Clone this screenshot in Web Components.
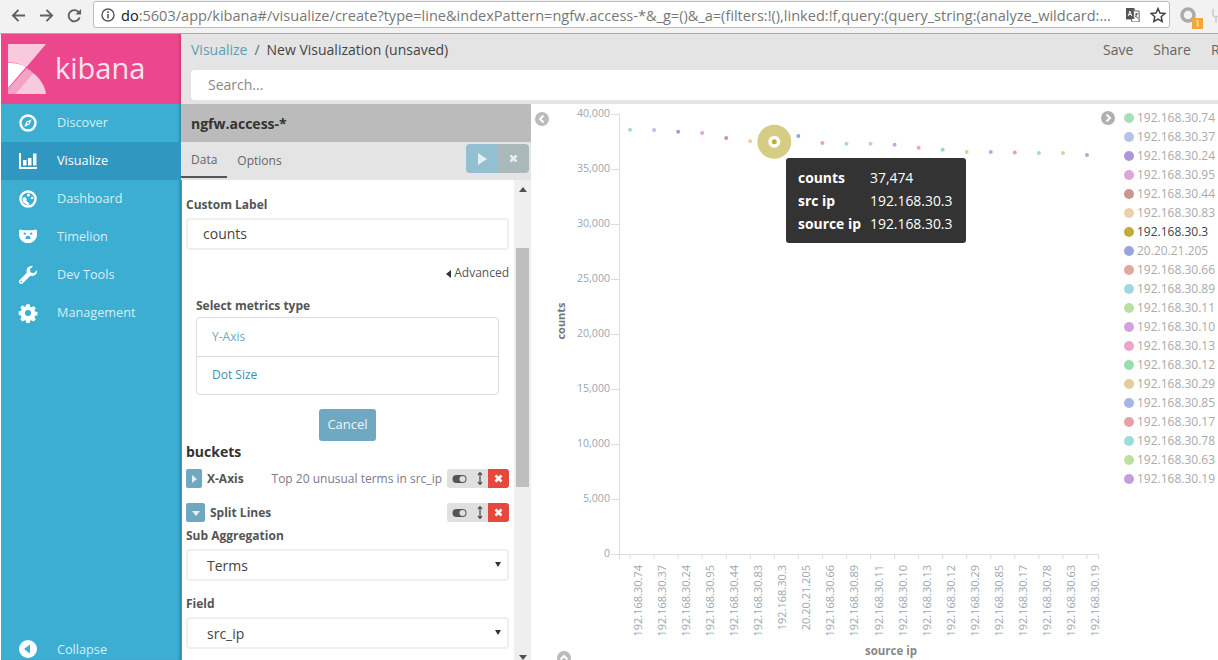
<!DOCTYPE html>
<html>
<head>
<meta charset="utf-8">
<title>Kibana</title>
<style>
  html, body { margin: 0; height: 660px; overflow: hidden; background: #fff; }
  body { font-family: "Open Sans", "Liberation Sans", sans-serif; display: flex; flex-direction: column; }
  .app { flex: 1; display: flex; min-height: 0; padding-left: 1px; }
  .work { flex: 1; min-width: 0; display: flex; flex-direction: column; }
  .split { flex: 1; display: flex; min-height: 0; }
</style>
</head>
<body>
<browser-bar></browser-bar>
<div class="app">
  <kbn-sidebar>
    <nav-item icon="compass">Discover</nav-item>
    <nav-item icon="bars" active>Visualize</nav-item>
    <nav-item icon="dash">Dashboard</nav-item>
    <nav-item icon="bear">Timelion</nav-item>
    <nav-item icon="wrench">Dev Tools</nav-item>
    <nav-item icon="gear">Management</nav-item>
  </kbn-sidebar>
  <div class="work">
    <top-nav></top-nav>
    <div class="split">
      <vis-editor></vis-editor>
      <line-chart></line-chart>
    </div>
  </div>
</div>

<script>
const ICONS = {
  compass: '<circle cx="9" cy="9" r="7.5" fill="none" stroke="currentColor" stroke-width="2.4"/><path d="M12.8 5.2 10.4 10.4 5.2 12.8 7.6 7.6Z" fill="currentColor"/><circle cx="9" cy="9" r="1" fill="#3caed2"/>',
  bars: '<path d="M0 1h2v14h16v2H0Z M4 8h3.5v5.5H4Z M9 6h3.5v7.5H9Z M14 1.500h3.500v12H14Z" fill="currentColor"/>',
  dash: '<circle cx="9" cy="9" r="7.500" fill="none" stroke="currentColor" stroke-width="2.400"/><path d="M3.500 8.500a2.200 2.200 0 1 1 3.800 2.200l3.700 3.500-3 .8-4-3Z" fill="currentColor"/><circle cx="9.500" cy="5" r="1.500" fill="currentColor"/><circle cx="13" cy="8" r="1.300" fill="currentColor"/>',
  bear: '<path d="M0 2.500c1-1.200 2.600-1.200 3.600-.3h10.800c1-.9 2.600-.9 3.600.3v3.700c0 5-3.700 8.800-9 8.800s-9-3.800-9-8.800Z" fill="currentColor"/><circle cx="5.800" cy="5.600" r="1.200" fill="#3caed2"/><circle cx="12.200" cy="5.600" r="1.200" fill="#3caed2"/><path d="M6.500 11c0-2 1-3.200 2.500-3.200s2.500 1.200 2.500 3.200Z" fill="#3caed2"/>',
  wrench: '<path d="M18 4.200 14.800 7.300 11.600 6.500 10.800 3.200 14 .2C11.300-.5 8.500.8 7.700 3.400c-.4 1.200-.3 2.300.1 3.400L.6 14c-.9.900-.9 2.300 0 3.200s2.300.9 3.200 0l7.300-7.300c3.500 1 7.400-1.500 6.900-5.700ZM2.200 16.500a.9.900 0 1 1 0-1.800.9.900 0 0 1 0 1.800Z" fill="currentColor"/>',
  gear: '<path fill-rule="evenodd" d="M7.300 0h3.400l.5 2.500 1.500.6 2.100-1.400 2.400 2.400-1.400 2.100.6 1.500 2.500.5v3.400l-2.500.5-.6 1.500 1.400 2.100-2.400 2.400-2.100-1.400-1.500.6-.5 2.500H7.300l-.5-2.500-1.500-.6-2.100 1.400-2.400-2.400 1.400-2.100-.6-1.500L-.900 11V7.600l2.500-.5.600-1.500L.8 3.500l2.400-2.400 2.100 1.400 1.500-.6ZM9 6a3.200 3.200 0 1 0 0 6.400A3.200 3.200 0 0 0 9 6Z" fill="currentColor" transform="translate(.5 .3) scale(.95)"/>'
};

class BrowserBar extends HTMLElement {
  constructor() {
    super();
    this.attachShadow({ mode: 'open' }).innerHTML = `
      <style>
        :host { display: flex; flex: none; align-items: flex-start; height: 34px; box-sizing: border-box; background: #f2f2f2; border-bottom: 1px solid #a9a9a9; overflow: hidden; font-family: "Open Sans", sans-serif; }
        .nav { display: flex; flex: none; width: 93px; height: 30px; align-items: center; padding-left: 11px; gap: 13px; box-sizing: border-box; color: #5f6060; }
        .nav svg { width: 15px; height: 15px; }
        .url { flex: none; width: 1077px; height: 27px; margin-top: 1px; box-sizing: border-box; background: #fff; border: 1px solid #bdbdbd; border-radius: 3px; display: flex; align-items: center; padding-left: 7px; gap: 6px; color: #777; font-size: 14.55px; white-space: nowrap; overflow: hidden; }
        .url b { font-weight: 400; color: #111; }
        .url .t { width: 994px; overflow: hidden; flex: none; }
        .url svg { flex: none; }
        .ext { position: relative; flex: none; margin-left: 10px; margin-top: 5px; width: 48px; height: 24px; color: #aaa; }
        .badge { position: absolute; left: 12px; top: 13px; width: 11px; height: 11px; background: #eea83c; color: #fff; font-size: 9px; line-height: 11px; text-align: center; }
      </style>
      <div class="nav">
        <svg viewBox="0 0 16 16"><path d="M15 8H2M8 2 2 8l6 6" fill="none" stroke="currentColor" stroke-width="2"/></svg>
        <svg viewBox="0 0 16 16"><path d="M1 8h13M8 2l6 6-6 6" fill="none" stroke="currentColor" stroke-width="2"/></svg>
        <svg viewBox="0 0 16 16"><path d="M13.500 10a6 6 0 1 1-.8-5.200" fill="none" stroke="currentColor" stroke-width="2"/><path d="M15 1v6H9Z" fill="currentColor"/></svg>
      </div>
      <div class="url">
        <svg width="14" height="14" viewBox="0 0 14 14"><circle cx="7" cy="7" r="6" fill="none" stroke="#555" stroke-width="1.400"/><path d="M6.200 6h1.600v4.500H6.200ZM6.200 3.300h1.600v1.600H6.200Z" fill="#555"/></svg>
        <span class="t"><b>do</b>:5603/app/kibana#/visualize/create?type=line&amp;indexPattern=ngfw.access-*&amp;_g=()&amp;_a=(filters:!(),linked:!f,query:(query_string:(analyze_wildcard:...</span>
        <svg width="14" height="14" viewBox="0 0 16 14" preserveAspectRatio="none" style="margin-left:5px"><path d="M0 0h9l1 3h5v11H7l-1-3H0Z" fill="#fff" stroke="#555"/><path d="M0 0h9v11H0Z" fill="#555"/><path d="M2.500 8 4.500 3l2 5M3.200 6.500h2.600" fill="none" stroke="#fff"/><path d="M10 6h4M12 5v1c0 2-1 3-2.500 4M10.500 7.500c.7 1.300 2 2.300 3.500 2.700" fill="none" stroke="#555"/></svg>
        <svg width="16" height="16" viewBox="0 0 16 16" style="margin-left:4px"><path d="M8 1.500 10 6l4.800.5-3.600 3.200 1 4.800L8 12l-4.200 2.500 1-4.800L1.200 6.500 6 6Z" fill="none" stroke="#444" stroke-width="1.500"/></svg>
      </div>
      <div class="ext">
        <svg width="48" height="20" viewBox="0 0 48 20"><circle cx="8" cy="10" r="6" fill="none" stroke="currentColor" stroke-width="3.500"/><path d="M33 4v5c0 2 1 3 3 3s3-1 3-3V4M36 12v6" fill="none" stroke="#ccc" stroke-width="1.500"/></svg>
        <span class="badge">1</span>
      </div>`;
  }
}

class NavItem extends HTMLElement {
  constructor() {
    super();
    this.attachShadow({ mode: 'open' }).innerHTML = `
      <style>
        :host { display: flex; align-items: center; height: 38px; box-sizing: border-box; padding-bottom: 2px; color: #d6eff7; font-size: 12.7px; }
        :host([active]) { background: #2f97c0; color: #fff; }
        svg { width: 18px; height: 18px; margin: 2px 20px 0 18px; color: #fff; overflow: visible; }
      </style>
      <svg viewBox="0 0 18 18">${ICONS[this.getAttribute('icon')] || ''}</svg>
      <slot></slot>`;
  }
}

class KbnSidebar extends HTMLElement {
  constructor() {
    super();
    this.attachShadow({ mode: 'open' }).innerHTML = `
      <style>
        :host { display: flex; flex-direction: column; flex: none; width: 180px; height: 100%; background: #3caed2; box-shadow: inset -3px 0 2px -1px rgba(20,90,120,.35); font-family: "Open Sans", sans-serif; }
        .logo { height: 70px; background: #ec478d; display: flex; align-items: center; padding-left: 7px; box-sizing: border-box; box-shadow: inset -3px 0 2px -1px rgba(120,20,60,.2); }
        .logo svg { flex: none; width: 38px; height: 50px; }
        .logo span { color: #fce4ee; font-size: 29px; line-height: 40px; margin-left: 9px; margin-top: -2px; }
        .items { flex: 1; }
        .collapse { display: flex; align-items: center; height: 22px; color: #d6eff7; font-size: 12.7px; }
        .collapse svg { width: 18px; height: 18px; margin: 0 20px 0 18px; }
      </style>
      <div class="logo">
        <svg viewBox="0 0 38 50">
          <path d="M0 0H38L18.500 23C13 20 6 18 0 18.500Z" fill="#f9c9dd"/>
          <path d="M0 19C6 18.500 13 20 18 23L0 44Z" fill="#fff"/>
          <path d="M0 50V45L18.500 24C21 25.500 23 27 25 29L7 50Z" fill="#f5a3c4"/>
          <path d="M7 50 25 29C32 34 37 42 38 50Z" fill="#f9c9dd"/>
        </svg>
        <span>kibana</span>
      </div>
      <div class="items"><slot></slot></div>
      <div class="collapse">
        <svg viewBox="0 0 18 18"><circle cx="9" cy="9" r="9" fill="#fff"/><path d="M11 4.500v9L5 9Z" fill="#3caed2"/></svg>
        Collapse
      </div>`;
  }
}

class TopNav extends HTMLElement {
  constructor() {
    super();
    this.attachShadow({ mode: 'open' }).innerHTML = `
      <style>
        :host { display: block; flex: none; height: 70px; background: #e4e4e4; padding-left: 10px; font-family: "Open Sans", sans-serif; font-size: 14px; box-sizing: border-box; }
        .row { display: flex; height: 36px; padding-bottom: 6px; box-sizing: border-box; align-items: center; color: #444; white-space: nowrap; }
        .crumb { color: #5a9fb8; }
        .sep { margin: 0 7px 0 7px; color: #666; }
        .acts { margin-left: auto; display: flex; color: #666; width: 115px; gap: 20px; flex: none; }
        .search { height: 30px; box-sizing: border-box; padding-bottom: 2px; background: #fff; border-radius: 4px 0 0 4px; display: flex; align-items: center; padding-left: 17px; color: #888; }
      </style>
      <div class="row">
        <span class="crumb">Visualize</span><span class="sep">/</span><span>New Visualization (unsaved)</span>
        <span class="acts"><span>Save</span><span>Share</span><span>R</span></span>
      </div>
      <div class="search">Search...</div>`;
  }
}

class FormSelect extends HTMLElement {
  constructor() {
    super();
    this.attachShadow({ mode: 'open' }).innerHTML = `
      <style>
        :host { display: flex; align-items: center; height: 32px; box-sizing: border-box; border: 2px solid #ecf0f1; border-radius: 4px; padding-left: 19px; font-size: 14px; color: #444; position: relative; }
        i { position: absolute; right: 6px; top: 11px; border: 3px solid transparent; border-top: 5px solid #333; border-bottom: 0; }
      </style>
      <slot></slot><i></i>`;
  }
}

class AggRow extends HTMLElement {
  constructor() {
    super();
    const open = this.hasAttribute('open');
    this.attachShadow({ mode: 'open' }).innerHTML = `
      <style>
        :host { display: flex; align-items: center; height: 19px; font-size: 12px; color: #666; white-space: nowrap; }
        .tog { flex: none; width: ${open ? 19 : 16}px; height: 19px; border-radius: 2px; background: #6fa9c1; display: flex; align-items: center; justify-content: center; margin-right: 5px; }
        b { color: #555; font-weight: 700; }
        .sum { margin-left: auto; margin-right: 5px; color: #7b7b8a; }
        .ctl { margin-left: auto; flex: none; display: flex; width: 62px; height: 19px; background: #e0e0e0; border-radius: 3px; overflow: hidden; align-items: center; }
        .sum + .ctl { margin-left: 0; }
        .ctl svg { flex: none; }
        .x { margin-left: auto; width: 21px; height: 19px; background: #e8483b; display: flex; align-items: center; justify-content: center; }
      </style>
      <span class="tog"><svg width="8" height="8" viewBox="0 0 8 8"><path d="${open ? 'M0 2h8L4 7Z' : 'M2 0v8l5-4Z'}" fill="#e4eff4"/></svg></span>
      <b><slot></slot></b>
      ${this.hasAttribute('summary') ? `<span class="sum">${this.getAttribute('summary')}</span>` : ''}
      <span class="ctl">
        <svg width="15" height="10" viewBox="0 0 15 10" style="margin-left:5px"><rect x="0.500" y="1" width="14" height="8" rx="4" fill="#555"/><circle cx="10.500" cy="5" r="3" fill="#e0e0e0"/></svg>
        <svg width="6" height="13" viewBox="0 0 6 13" style="margin-left:10px"><path d="M3 1v11M1 3l2-2.500L5 3M1 10l2 2.500L5 10" fill="none" stroke="#555" stroke-width="1.300"/></svg>
        <span class="x"><svg width="9" height="9" viewBox="0 0 9 9"><path d="M1.500 1.500l6 6M7.500 1.500l-6 6" stroke="#fff" stroke-width="2.500"/></svg></span>
      </span>`;
  }
}

class VisEditor extends HTMLElement {
  constructor() {
    super();
    this.attachShadow({ mode: 'open' }).innerHTML = `
      <style>
        :host { display: flex; flex-direction: column; flex: none; width: 350px; height: 100%; min-height: 0; color: #444; font-family: "Open Sans", sans-serif; font-size: 12px; }
        .title { flex: none; height: 38px; background: #bbb; display: flex; align-items: center; padding-left: 10px; font-size: 14px; font-weight: 700; color: #333; }
        .tabs { flex: none; height: 38px; background: #e4e4e4; display: flex; position: relative; box-sizing: border-box; }
        .tab { height: 36px; display: flex; align-items: center; padding: 0 10px; color: #666; box-sizing: border-box; }
        .tab.on { border-bottom: 2px solid #555; }
        .run { margin-left: auto; margin-right: 2px; margin-top: 2px; display: flex; height: 29px; }
        .run span { width: 32px; display: flex; align-items: center; justify-content: center; }
        .run .go { background: #93c0d0; border-radius: 4px 0 0 4px; }
        .run .no { background: #a9b8b8; width: 31px; border-radius: 0 4px 4px 0; }
        .body { flex: 1; min-height: 0; display: flex; overflow: hidden; box-shadow: inset 1px 0 0 #3a9cc0; }
        .form { flex: 1; min-width: 0; padding: 17px 5px 0 5px; }
        .lab { font-weight: 700; color: #555; line-height: 16px; display: block; }
        .input { height: 32px; box-sizing: border-box; padding-bottom: 2px; border: 2px solid #ecf0f1; border-radius: 4px; margin-top: 5px; display: flex; align-items: center; padding-left: 15px; font-size: 14px; }
        .adv { text-align: right; margin-top: 15px; line-height: 16px; color: #555; }
        .adv i { display: inline-block; border: 4px solid transparent; border-right: 5px solid #333; border-left: 0; margin-right: 3px; vertical-align: -1px; }
        .metrics { padding: 0 10px; margin-top: 17px; }
        .list { border: 1px solid #d9dde0; border-radius: 4px; margin-top: 3px; }
        .list div { height: 38px; display: flex; align-items: center; padding: 0 0 2px 15px; color: #6da8c0; box-sizing: border-box; }
        .list div + div { border-top: 1px solid #d9dde0; color: #3f8fae; }
        .cancel { display: block; width: 57px; height: 32px; line-height: 30px; margin: 14px auto 0; background: #6fa9c1; color: #eef6f9; border-radius: 3px; text-align: center; font-size: 13px; }
        h3 { margin: 1px 0 0; font-size: 14px; line-height: 20px; font-weight: 700; color: #333; }
        agg-row { margin-top: 7px; }
        agg-row + agg-row { margin-top: 15px; }
        .sub { margin-top: 6px; }
        .f2 { margin-top: 15px; }
        form-select { margin-top: 5px; }
        .bar { flex: none; width: 17px; background: #efefef; position: relative; }
        .thumb { position: absolute; left: 2px; width: 13px; top: 68px; height: 239px; background: #bebebe; }
        .bar i { position: absolute; left: 5px; border: 4px solid transparent; }
        .bar .up { top: 7px; border-bottom: 5px solid #505050; border-top: 0; }
        .bar .dn { bottom: 0; border-top: 5px solid #505050; border-bottom: 0; }
      </style>
      <div class="title">ngfw.access-*</div>
      <div class="tabs">
        <span class="tab on">Data</span><span class="tab">Options</span>
        <span class="run">
          <span class="go"><svg width="12" height="12" viewBox="0 0 12 12"><path d="M2 0v12l9-6Z" fill="#e4eff4"/></svg></span>
          <span class="no"><svg width="9" height="9" viewBox="0 0 9 9"><path d="M1.500 1.500l6 6M7.500 1.500l-6 6" stroke="#e8eeee" stroke-width="2.500"/></svg></span>
        </span>
      </div>
      <div class="body">
        <div class="form">
          <span class="lab">Custom Label</span>
          <div class="input">counts</div>
          <div class="adv"><i></i>Advanced</div>
          <div class="metrics">
            <span class="lab">Select metrics type</span>
            <div class="list"><div>Y-Axis</div><div>Dot Size</div></div>
          </div>
          <span class="cancel">Cancel</span>
          <h3>buckets</h3>
          <agg-row summary="Top 20 unusual terms in src_ip">X-Axis</agg-row>
          <agg-row open>Split Lines</agg-row>
          <span class="lab sub">Sub Aggregation</span>
          <form-select>Terms</form-select>
          <span class="lab f2">Field</span>
          <form-select>src_ip</form-select>
        </div>
        <div class="bar"><i class="up"></i><div class="thumb"></div><i class="dn"></i></div>
      </div>`;
  }
}

// same order for the x axis and the legend
const POINTS = [
  ['192.168.30.74', 129.7, '#a6dfb8'], ['192.168.30.37', 130, '#b5c2ea'], ['192.168.30.24', 131.7, '#ae97d9'],
  ['192.168.30.95', 133, '#dea5dd'], ['192.168.30.44', 138, '#cb9594'], ['192.168.30.83', 141.3, '#ecd0ad'],
  ['192.168.30.3', 141.7, '#c2ad3c'], ['20.20.21.205', 136, '#99a3dc'], ['192.168.30.66', 143, '#e0a8a0'],
  ['192.168.30.89', 143.7, '#9ed8e0'], ['192.168.30.11', 143.7, '#b8e0a3'], ['192.168.30.10', 144.7, '#d0a3e0'],
  ['192.168.30.13', 147.7, '#eba5c8'], ['192.168.30.12', 149.7, '#97dfb0'], ['192.168.30.29', 152, '#e3cd9b'],
  ['192.168.30.85', 152, '#a3b7e6'], ['192.168.30.17', 152.5, '#e8a0a8'], ['192.168.30.78', 153, '#9ddcd8'],
  ['192.168.30.63', 153, '#bde0a0'], ['192.168.30.19', 155, '#c0a0e0']
];

class LineChart extends HTMLElement {
  constructor() {
    super();
    // svg origin sits at page (531,104)
    const ox = 531, oy = 104;
    const ticks = [40000, 35000, 30000, 25000, 20000, 15000, 10000, 5000, 0];
    const yTicks = ticks.map((v, i) => {
      const y = 114 + i * 55 - oy;
      return `<path d="M${611 - ox} ${y + .5}H${619 - ox}" stroke="#ddd"/><text x="${610 - ox}" y="${y + 3}" text-anchor="end" class="t" style="font-size:10.600px">${v.toLocaleString('en-US')}</text>`;
    }).join('');
    const xTicks = POINTS.map((p, i) => {
      const x = 630 + i * 24.05 - ox;
      return `<path d="M${x} ${554 - oy}v5" stroke="#ddd"/><text transform="translate(${x + 12} ${565 - oy}) rotate(-90)" text-anchor="end" class="t">${p[0]}</text>`;
    }).join('');
    const dots = POINTS.map((p, i) => {
      const x = 630 + i * 24.05 - ox;
      if (p[0] === '192.168.30.3') {
        return `<circle cx="${x}" cy="${p[1] - oy}" r="17" fill="#d6cd85"/><circle cx="${x}" cy="${p[1] - oy}" r="6" fill="#fff"/><circle cx="${x}" cy="${p[1] - oy}" r="2.500" fill="${p[2]}"/>`;
      }
      return `<circle cx="${x}" cy="${p[1] - oy}" r="2" fill="${p[2]}"/>`;
    }).join('');
    const legend = POINTS.map(p => `<li class="${p[0] === '192.168.30.3' ? 'on' : ''}"><i style="background:${p[2]}"></i>${p[0]}</li>`).join('');

    this.attachShadow({ mode: 'open' }).innerHTML = `
      <style>
        :host { display: block; flex: 1; min-width: 0; height: 100%; position: relative; overflow: hidden; font-family: "Open Sans", sans-serif; }
        .grid { display: grid; grid-template-columns: 587px 1fr; height: 100%; }
        svg.plot { display: block; width: 587px; height: 556px; }
        .t { font-size: 11px; fill: #9aa6b2; font-family: "Open Sans", sans-serif; }
        .axt { font-size: 11px; font-weight: 700; fill: #777; font-family: "Open Sans", sans-serif; }
        ul { list-style: none; margin: 0; padding: 4px 0 0 6px; font-size: 12px; color: #aaa; white-space: nowrap; }
        li { height: 19px; display: flex; align-items: center; }
        li.on { color: #444; }
        li i { width: 10px; height: 10px; border-radius: 50%; margin-right: 3px; flex: none; }
        .tip { position: absolute; left: 255px; top: 54px; width: 180px; height: 85px; box-sizing: border-box; background: #333; border-radius: 3px; color: #fff; font-size: 13.900px; padding: 8px 12px; display: grid; grid-template-columns: 72px 1fr; grid-auto-rows: 23px; align-items: center; white-space: nowrap; }
        .tip b { font-weight: 700; }
        .arrow { position: absolute; width: 14px; height: 14px; }
      </style>
      <div class="grid">
        <svg class="plot" viewBox="0 0 587 556">
          <path d="M${619 - ox + .5} ${114 - oy}V${559 - oy}M${619 - ox} ${554 - oy + .5}H${1099 - ox}M${1098.500 - ox} ${554 - oy}v5" stroke="#ddd" fill="none"/>
          ${yTicks}${xTicks}${dots}
          <text transform="translate(${565 - ox} 217) rotate(-90)" text-anchor="middle" class="axt">counts</text>
          <text x="${890 - ox + 1}" y="${655 - oy}" text-anchor="middle" class="axt" style="font-size:11.500px;fill:#888">source ip</text>
        </svg>
        <ul>${legend}</ul>
      </div>
      <div class="tip"><b>counts</b><span>37,474</span><b>src ip</b><span>192.168.30.3</span><b>source ip</b><span>192.168.30.3</span></div>
      <svg class="arrow" style="left:4px;top:8px" viewBox="0 0 14 14"><circle cx="7" cy="7" r="7" fill="#bbb"/><path d="M8.500 3.500 5 7l3.500 3.500" fill="none" stroke="#fff" stroke-width="2"/></svg>
      <svg class="arrow" style="left:570px;top:7px" viewBox="0 0 14 14"><circle cx="7" cy="7" r="7" fill="#b0b0b0"/><path d="M5.500 3.500 9 7l-3.500 3.500" fill="none" stroke="#fff" stroke-width="2"/></svg>
      <svg class="arrow" style="left:26px;top:547px" viewBox="0 0 14 14"><circle cx="7" cy="7" r="7" fill="#bbb"/><path d="M3.500 8.500 7 5l3.500 3.500" fill="none" stroke="#fff" stroke-width="2"/></svg>`;
  }
}

customElements.define('browser-bar', BrowserBar);
customElements.define('nav-item', NavItem);
customElements.define('kbn-sidebar', KbnSidebar);
customElements.define('top-nav', TopNav);
customElements.define('form-select', FormSelect);
customElements.define('agg-row', AggRow);
customElements.define('vis-editor', VisEditor);
customElements.define('line-chart', LineChart);
</script>
</body>
</html>
